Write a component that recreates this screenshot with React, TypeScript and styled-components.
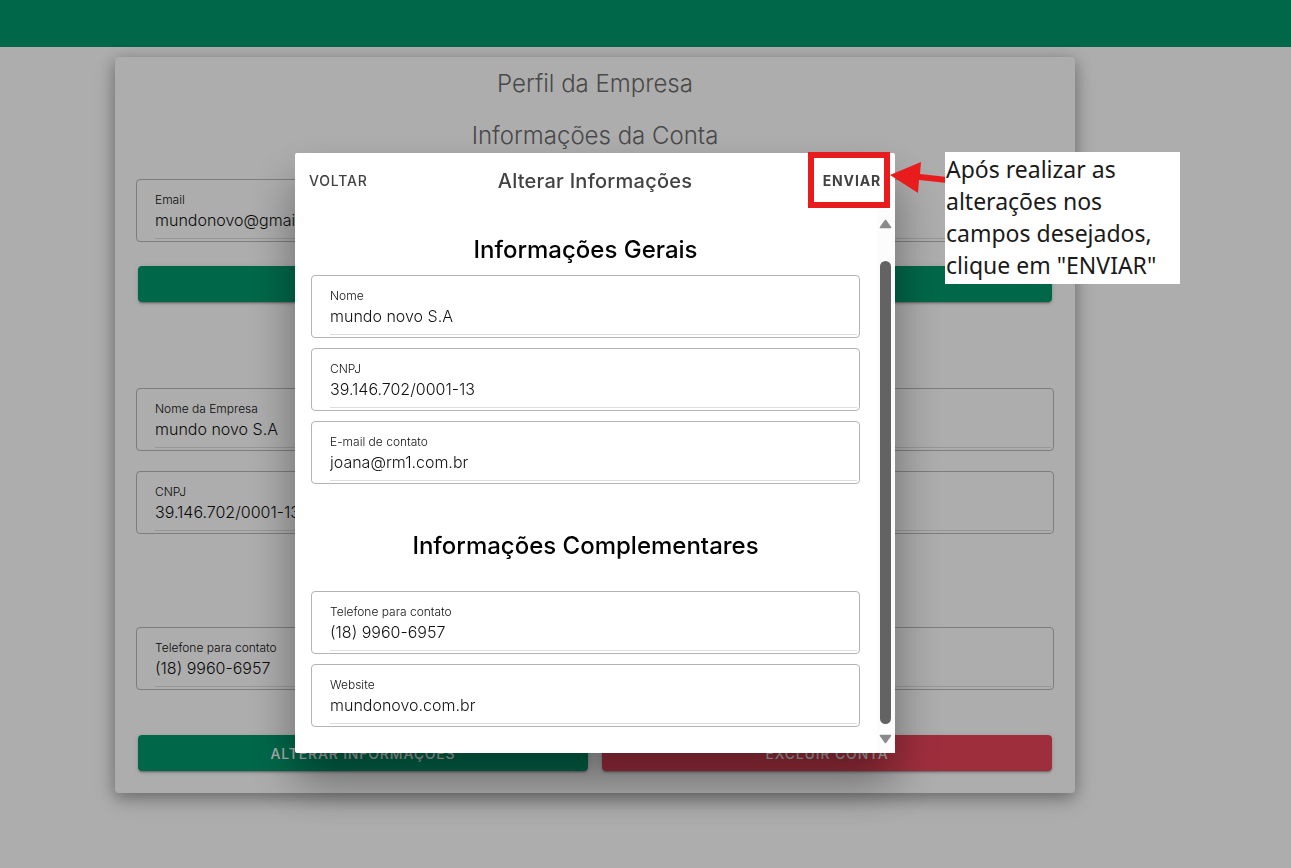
import React, { useId, useState } from 'react';
import styled, { createGlobalStyle } from 'styled-components';

const GlobalStyle = createGlobalStyle`
  *, *::before, *::after { box-sizing: border-box; }
  body {
    margin: 0;
    background: #fff;
    color: #000;
    font-family: Inter, "Liberation Sans", sans-serif;
    font-size: 16px;
  }
  h1, h2, p { margin: 0; }
`;

const Page = styled.div`
  min-height: 100vh;
`;

const TopBar = styled.header`
  height: 47px;
  background: #00996c;
`;

const Main = styled.main`
  padding: 10px 101px 40px 0;
`;

const Card = styled.section`
  width: 100%;
  max-width: 960px;
  margin: 0 auto;
  padding: 1px 21px 22px;
  border-radius: 4px;
  background: #fff;
  box-shadow: 0 4px 16px rgba(0, 0, 0, 0.32), 0 8px 24px rgba(0, 0, 0, 0.12);
`;

const CardTitle = styled.h1`
  padding: 10px 0;
  font-size: 24px;
  line-height: 32px;
  font-weight: 300;
  text-align: center;
  color: #6c6c6c;
`;

const CardGroup = styled.div<{ $top: number }>`
  display: flex;
  flex-direction: column;
  gap: 20px;
  margin-top: ${(p) => p.$top}px;
`;

const FieldBox = styled.div<{ $muted?: boolean }>`
  height: 63px;
  padding: 13px 2px 2px 18px;
  border: 1px solid ${(p) => (p.$muted ? '#b9b9b9' : '#b4b4b4')};
  border-radius: 4px;
`;

const FieldInner = styled.div`
  display: flex;
  flex-direction: column;
  height: 100%;
  border-bottom: 1px solid #dedede;
`;

const FieldLabel = styled.label`
  font-size: 12px;
  line-height: 14px;
  font-weight: 300;
  color: #111;
`;

const FieldInput = styled.input`
  width: 100%;
  height: 26px;
  padding: 0;
  border: 0;
  outline: 0;
  background: transparent;
  color: #111;
  font: inherit;
  font-weight: 300;
`;

const ActionRow = styled.div<{ $top: number }>`
  display: flex;
  gap: 14px;
  margin-top: ${(p) => p.$top}px;
  padding: 0 2px;
`;

const ActionButton = styled.button<{ $tone: 'primary' | 'danger' }>`
  flex: 1;
  height: 36px;
  padding: 0;
  border: 0;
  border-radius: 4px;
  background: ${(p) => (p.$tone === 'primary' ? '#00996c' : '#eb445a')};
  color: #fff;
  font: inherit;
  font-size: 14px;
  font-weight: 500;
  letter-spacing: 0.06em;
  text-transform: uppercase;
  box-shadow: 0 3px 1px -2px rgba(0, 0, 0, 0.2), 0 2px 2px 0 rgba(0, 0, 0, 0.14),
    0 1px 5px 0 rgba(0, 0, 0, 0.12);
`;

const Backdrop = styled.div`
  position: fixed;
  inset: 0;
  display: flex;
  justify-content: center;
  align-items: flex-start;
  padding: 153px 101px 0 0;
  background: rgba(0, 0, 0, 0.32);
`;

const ModalFrame = styled.div`
  position: relative;
  width: 600px;
`;

const Modal = styled.div`
  display: flex;
  flex-direction: column;
  height: 600px;
  border-radius: 2px;
  background: #fff;
  box-shadow: 0 28px 48px rgba(0, 0, 0, 0.4);
`;

const ModalHeader = styled.header`
  display: grid;
  grid-template-columns: 1fr auto 1fr;
  align-items: center;
  height: 56px;
  padding: 0 14px;
  color: #424242;
`;

const ModalTitle = styled.h1`
  font-size: 20px;
  line-height: 24px;
  font-weight: 500;
  letter-spacing: 0.0125em;
`;

const HeaderButton = styled.button<{ $strong?: boolean }>`
  justify-self: ${(p) => (p.$strong ? 'end' : 'start')};
  padding: 0 0 2px;
  border: 0;
  background: none;
  color: inherit;
  font: inherit;
  font-size: 14px;
  font-weight: ${(p) => (p.$strong ? 700 : 500)};
  letter-spacing: 0.06em;
`;

const ModalBody = styled.div`
  display: flex;
  flex: 1;
  min-height: 0;
`;

const ModalForm = styled.form`
  flex: 1;
  padding: 25px 17px 0 16px;
`;

const SectionTitle = styled.h2`
  font-size: 24px;
  line-height: 32px;
  font-weight: 500;
  text-align: center;
`;

const FieldStack = styled.div<{ $top: number; $bottom: number }>`
  display: flex;
  flex-direction: column;
  gap: 10px;
  margin: ${(p) => p.$top}px 0 ${(p) => p.$bottom}px;
`;

const ScrollTrack = styled.div`
  display: flex;
  flex-direction: column;
  align-items: center;
  width: 18px;
  padding: 10px 2px 9px 0;
  background: #fcfcfc;
`;

const ScrollThumb = styled.div`
  flex: 1;
  width: 11px;
  margin: 32px 0 10px;
  border-radius: 6px;
  background: #636363;
`;

const Highlight = styled.div`
  position: absolute;
  top: -1px;
  right: 5px;
  width: 82px;
  height: 56px;
  border: 6px solid #e81c1c;
  pointer-events: none;
`;

const Pointer = styled.svg`
  position: absolute;
  top: 7px;
  left: 594px;
`;

const Note = styled.p`
  position: absolute;
  top: -1px;
  left: 650px;
  width: 235px;
  padding: 1px 0 3px 1px;
  background: #fff;
  color: #1a1a1a;
  font-family: "Noto Sans", "Open Sans", sans-serif;
  font-size: 23px;
  line-height: 32px;
`;

function Field({ label, value, muted }: { label: string; value: string; muted?: boolean }) {
  const id = useId();
  const [text, setText] = useState(value);
  return (
    <FieldBox $muted={muted}>
      <FieldInner>
        <FieldLabel htmlFor={id}>{label}</FieldLabel>
        <FieldInput
          id={id}
          value={text}
          readOnly={muted}
          onChange={(e) => setText(e.target.value)}
        />
      </FieldInner>
    </FieldBox>
  );
}

function ScrollArrow({ down }: { down?: boolean }) {
  return (
    <svg width="13" height="10" viewBox="0 0 13 10" aria-hidden="true">
      <path
        d={down ? 'M1.5 1.5h10L6.5 8.5z' : 'M1.5 8.5h10L6.5 1.5z'}
        fill="#8b8b8b"
        stroke="#8b8b8b"
        strokeWidth="1.6"
        strokeLinejoin="round"
      />
    </svg>
  );
}

export default function App() {
  return (
    <Page>
      <GlobalStyle />
      <TopBar />
      <Main>
        <Card>
          <CardTitle>Perfil da Empresa</CardTitle>
          <CardTitle as="h2">Informações da Conta</CardTitle>
          <CardGroup $top={17}>
            <Field muted label="Email" value="mundonovo@gmail.com" />
          </CardGroup>
          <ActionRow $top={24}>
            <ActionButton type="button" $tone="primary" />
          </ActionRow>
          <CardGroup $top={86}>
            <Field muted label="Nome da Empresa" value="mundo novo S.A" />
            <Field muted label="CNPJ" value="39.146.702/0001-13" />
          </CardGroup>
          <CardGroup $top={93}>
            <Field muted label="Telefone para contato" value="(18) 9960-6957" />
          </CardGroup>
          <ActionRow $top={45}>
            <ActionButton type="button" $tone="primary">Alterar Informações</ActionButton>
            <ActionButton type="button" $tone="danger">Excluir Conta</ActionButton>
          </ActionRow>
        </Card>
      </Main>

      <Backdrop>
        <ModalFrame>
          <Modal role="dialog" aria-modal="true" aria-labelledby="modal-title">
            <ModalHeader>
              <HeaderButton type="button">VOLTAR</HeaderButton>
              <ModalTitle id="modal-title">Alterar Informações</ModalTitle>
              <HeaderButton type="submit" form="company-form" $strong>ENVIAR</HeaderButton>
            </ModalHeader>
            <ModalBody>
              <ModalForm id="company-form" onSubmit={(e) => e.preventDefault()}>
                <SectionTitle>Informações Gerais</SectionTitle>
                <FieldStack $top={9} $bottom={46}>
                  <Field label="Nome" value="mundo novo S.A" />
                  <Field label="CNPJ" value="39.146.702/0001-13" />
                  <Field label="E-mail de contato" value="joana@rm1.com.br" />
                </FieldStack>
                <SectionTitle>Informações Complementares</SectionTitle>
                <FieldStack $top={29} $bottom={0}>
                  <Field label="Telefone para contato" value="(18) 9960-6957" />
                  <Field label="Website" value="mundonovo.com.br" />
                </FieldStack>
              </ModalForm>
              <ScrollTrack aria-hidden="true">
                <ScrollArrow />
                <ScrollThumb />
                <ScrollArrow down />
              </ScrollTrack>
            </ModalBody>
          </Modal>
          <Highlight />
          <Pointer width="58" height="36" viewBox="0 0 58 36" aria-hidden="true">
            <path d="M1 15 32 2 31 14 58 17 58 23 30 20 29 33z" fill="#e81c1c" />
          </Pointer>
          <Note>
            Após realizar as
            <br />
            alterações nos
            <br />
            campos desejados,
            <br />
            clique em "ENVIAR"
          </Note>
        </ModalFrame>
      </Backdrop>
    </Page>
  );
}
